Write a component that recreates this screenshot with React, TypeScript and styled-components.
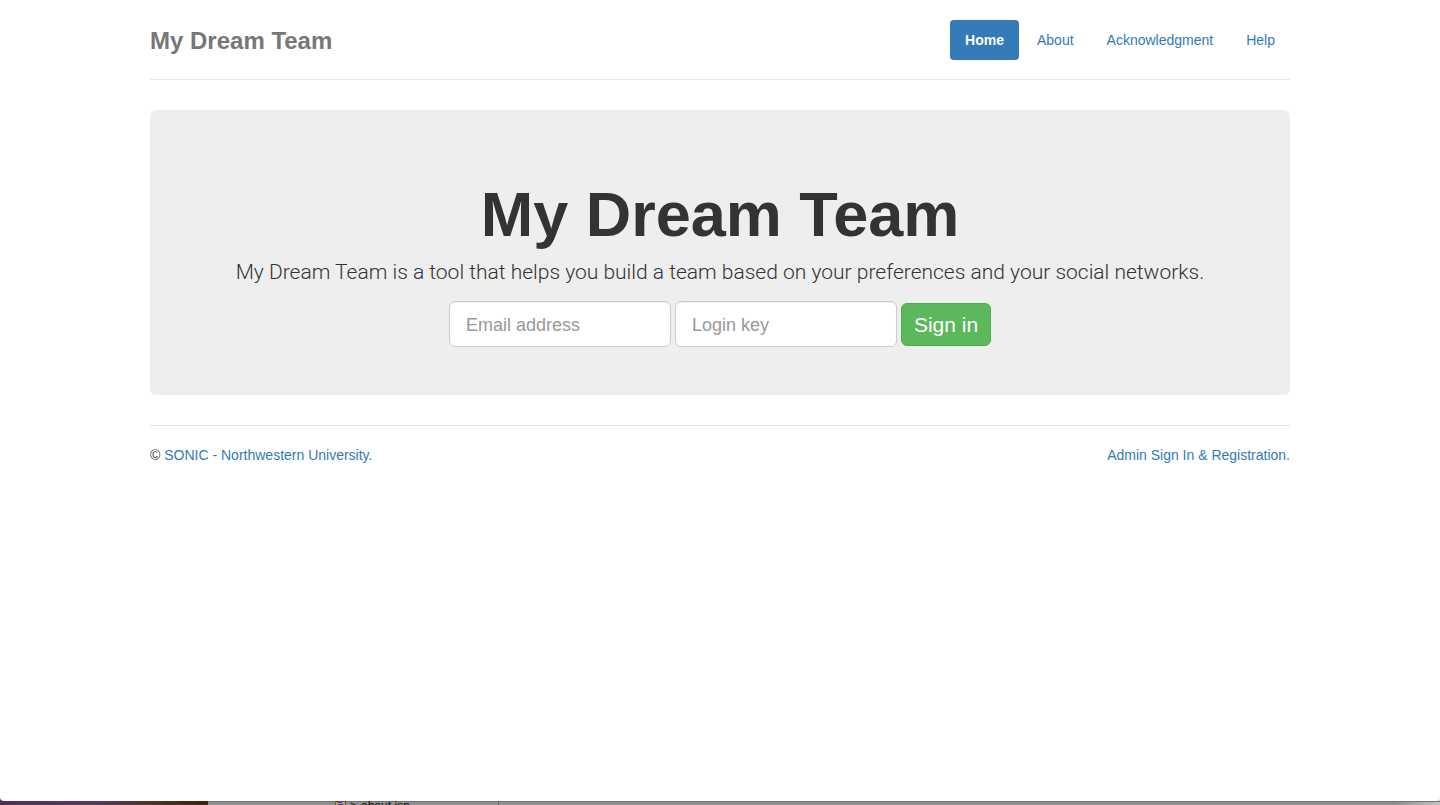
import React from "react";
import styled, { createGlobalStyle } from "styled-components";

const GlobalStyle = createGlobalStyle`
  * { box-sizing: border-box; }
  body {
    margin: 0;
    font-family: "Liberation Sans", Arial, sans-serif;
    font-size: 14px;
    line-height: 20px;
    color: #333;
    background: #8f8f8f;
  }
`;

const Desktop = styled.div`
  display: flex;
  flex-direction: column;
  min-height: 100vh;
  background: linear-gradient(to right, #4c3a5c 50%, #cfcfcf 50%);
`;

const Window = styled.div`
  flex: 1;
  padding: 20px 16px;
  background: #fff;
  border-radius: 0 0 4px 4px;
`;

const Container = styled.div`
  max-width: 1140px;
  margin: 0 auto;
`;

const Header = styled.header`
  display: flex;
  justify-content: space-between;
  align-items: flex-start;
  padding-bottom: 17px;
  margin-bottom: 30px;
  border-bottom: 1px solid #e5e5e5;
`;

const Brand = styled.h3`
  margin: 0;
  font-size: 24px;
  line-height: 42px;
  font-weight: 700;
  color: #777;
`;

const Nav = styled.nav`
  display: flex;
  gap: 3px;
`;

const Link = styled.a`
  color: #337ab7;
  text-decoration: none;
`;

const NavLink = styled(Link)<{ $active?: boolean }>`
  padding: 10px 15px;
  border-radius: 4px;
  color: ${(p) => (p.$active ? "#fff" : "#337ab7")};
  background: ${(p) => (p.$active ? "#337ab7" : "transparent")};
  font-weight: ${(p) => (p.$active ? 700 : 400)};
`;

const Hero = styled.main`
  padding: 70px 60px 48px;
  margin-bottom: 30px;
  border-radius: 6px;
  background: #eee;
  text-align: center;
`;

const Title = styled.h1`
  margin: 0 0 8px;
  font-size: 63px;
  line-height: 69px;
  font-weight: 700;
`;

const Lead = styled.p`
  margin: 0 0 14px;
  font-family: Roboto, "Liberation Sans", sans-serif;
  font-size: 21px;
  line-height: 30px;
  font-weight: 300;
`;

const Form = styled.form`
  display: flex;
  justify-content: center;
  align-items: center;
  gap: 4px;
`;

const Input = styled.input`
  width: 222px;
  height: 46px;
  padding: 11px 16px 9px;
  border: 1px solid #ccc;
  border-radius: 6px;
  background: #fff;
  box-shadow: inset 0 1px 1px rgba(0, 0, 0, 0.075);
  font: 18px "Liberation Sans", Arial, sans-serif;
  color: #555;
  &::placeholder {
    color: #999;
    opacity: 1;
  }
`;

const Submit = styled.button`
  height: 43px;
  padding: 2px 12px 0;
  border: 1px solid #4cae4c;
  border-radius: 6px;
  background: #5cb85c;
  color: #fff;
  font: 21px "Liberation Sans", Arial, sans-serif;
`;

const Footer = styled.footer`
  display: flex;
  justify-content: space-between;
  padding-top: 19px;
  border-top: 1px solid #e5e5e5;
`;

const Strip = styled.div`
  display: flex;
  height: 4px;
  overflow: hidden;
  box-shadow: inset 0 1px 0 #707070;
  background: linear-gradient(to right, #8f8f8f 97%, #c4c4c4);
`;

const Wallpaper = styled.div`
  width: 208px;
  background: linear-gradient(to right, #4c3058, #573a62 42%, #54302c 72%, #402008);
`;

const Sidebar = styled.div`
  display: flex;
  gap: 4px;
  width: 291px;
  padding-left: 127px;
  border-right: 1px solid #666;
  font-size: 12px;
  line-height: 10px;
  color: #111;
`;

const FileIcon = styled.svg`
  flex: none;
`;

export default function App() {
  return (
    <Desktop>
      <GlobalStyle />
      <Window>
        <Container>
          <Header>
            <Brand>My Dream Team</Brand>
            <Nav>
              <NavLink href="#home" $active>Home</NavLink>
              <NavLink href="#about">About</NavLink>
              <NavLink href="#acknowledgment">Acknowledgment</NavLink>
              <NavLink href="#help">Help</NavLink>
            </Nav>
          </Header>
          <Hero>
            <Title>My Dream Team</Title>
            <Lead>
              My Dream Team is a tool that helps you build a team based on your
              preferences and your social networks.
            </Lead>
            <Form onSubmit={(e) => e.preventDefault()}>
              <Input type="email" aria-label="Email address" placeholder="Email address" />
              <Input type="password" aria-label="Login key" placeholder="Login key" />
              <Submit type="submit">Sign in</Submit>
            </Form>
          </Hero>
          <Footer>
            <span>© <Link href="#sonic">SONIC - Northwestern University.</Link></span>
            <Link href="#admin">Admin Sign In &amp; Registration.</Link>
          </Footer>
        </Container>
      </Window>
      <Strip>
        <Wallpaper />
        <Sidebar>
          <FileIcon width="11" height="4" viewBox="0 0 11 4">
            <path d="M0.5 4V0.5H10.5V4" fill="#a99" stroke="#6b5a2c" />
            <path d="M2 1.5H7" stroke="#a02850" />
            <path d="M3 3.5H8" stroke="#33418c" />
          </FileIcon>
          <span>&gt;</span>
          <span>about.jsp</span>
        </Sidebar>
      </Strip>
    </Desktop>
  );
}
